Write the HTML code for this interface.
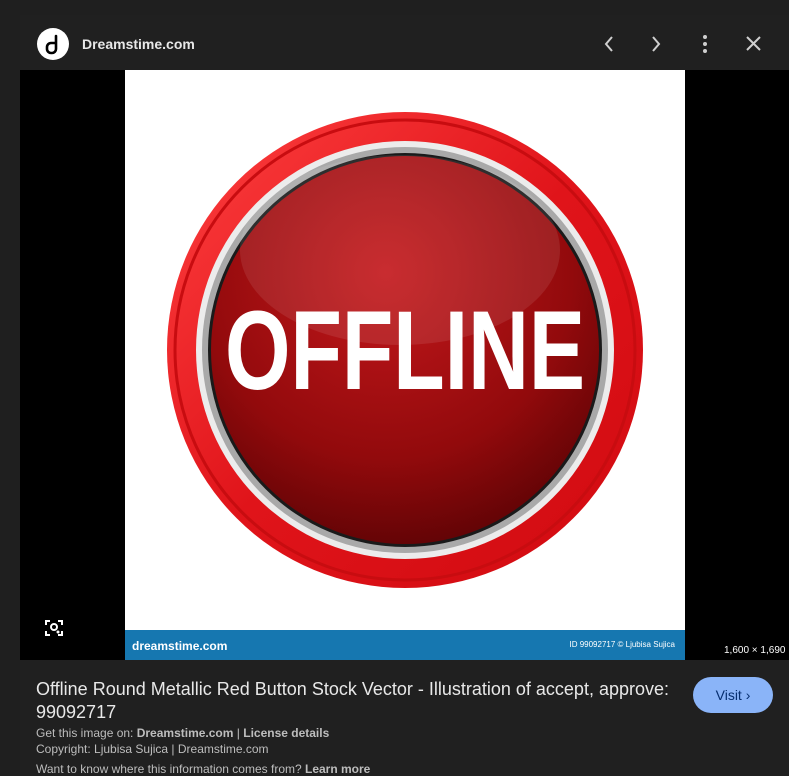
<!DOCTYPE html>
<html><head><meta charset="utf-8"><style>
*{margin:0;padding:0;box-sizing:border-box}
body{width:789px;height:776px;background:#1f1f1f;font-family:"Liberation Sans",sans-serif;overflow:hidden;position:relative;color:#e3e3e3}
.panel{position:absolute;left:20px;top:15px;width:769px;height:761px;background:#202020}
.logo{position:absolute;left:37px;top:28px;width:32px;height:32px;border-radius:50%;background:#fff}
.site{position:absolute;left:82px;top:36px;font-size:14px;font-weight:bold;color:#e8e8e8}
.img{position:absolute;left:20px;top:70px;width:769px;height:590px;background:#000}
.white{position:absolute;left:125px;top:70px;width:560px;height:590px;background:#fff;overflow:hidden}
.bar{position:absolute;left:0;top:560px;width:560px;height:30px;background:#1677b0}
.t{position:absolute;font-size:12px;color:#bdbdbd}
</style></head><body>
<div class="panel"></div>
<div class="logo"><svg width="32" height="32" viewBox="0 0 32 32"><path d="M19 8v13a4 4 0 0 1-4 4h-1a4 4 0 0 1-4-4v-2a4 4 0 0 1 4-4h5" fill="none" stroke="#000" stroke-width="2.6" stroke-linecap="round"/></svg></div>
<div class="site">Dreamstime.com</div>
<svg style="position:absolute;left:598px;top:33px" width="175" height="22" viewBox="0 0 175 22">
<path d="M14 4l-6 7 6 7" fill="none" stroke="#cfcfcf" stroke-width="2"/>
<path d="M55 4l6 7-6 7" fill="none" stroke="#cfcfcf" stroke-width="2"/>
<circle cx="107" cy="4" r="2" fill="#cfcfcf"/><circle cx="107" cy="11" r="2" fill="#cfcfcf"/><circle cx="107" cy="18" r="2" fill="#cfcfcf"/>
<path d="M149 4l13 13M162 4l-13 13" stroke="#cfcfcf" stroke-width="2"/>
</svg>
<div class="img"></div>
<div class="white">
<svg width="560" height="560" style="position:absolute;left:0;top:0">
<defs>
<radialGradient id="g1" cx="0.45" cy="0.3" r="0.8"><stop offset="0" stop-color="#c4181c"/><stop offset="0.6" stop-color="#920a0c"/><stop offset="1" stop-color="#500103"/></radialGradient>
<linearGradient id="g2" x1="0" y1="0" x2="1" y2="1"><stop offset="0" stop-color="#ff4040"/><stop offset="0.5" stop-color="#e0141a"/><stop offset="1" stop-color="#d00a10"/></linearGradient>
</defs>
<circle cx="280" cy="280" r="238" fill="url(#g2)"/>
<circle cx="280" cy="280" r="230" fill="none" stroke="#c80c10" stroke-width="3"/>
<circle cx="280" cy="280" r="209" fill="#ececec"/>
<circle cx="280" cy="280" r="203" fill="#a9a9a9"/>
<circle cx="280" cy="280" r="197" fill="#1a1a1a"/>
<circle cx="280" cy="280" r="194" fill="url(#g1)"/>
<ellipse cx="275" cy="180" rx="160" ry="95" fill="#fff" opacity="0.09"/>
<text x="100" y="319" font-family="'Liberation Sans Narrow','Liberation Sans',sans-serif" font-weight="bold" font-size="112" fill="#fff" textLength="360" lengthAdjust="spacingAndGlyphs">OFFLINE</text>
</svg>
<div class="bar"><span style="position:absolute;left:7px;top:9px;font-size:12px;font-weight:bold;color:#fff">dreamstime.com</span><span style="position:absolute;right:10px;top:10px;font-size:8px;color:#fff">ID 99092717 © Ljubisa Sujica</span></div>
</div>
<svg style="position:absolute;left:44px;top:618px" width="20" height="20" viewBox="0 0 20 20"><path d="M2 7V3h4M14 3h4v4M18 13v4h-4M6 17H2v-4" fill="none" stroke="#fff" stroke-width="2"/><circle cx="10" cy="9" r="3" fill="none" stroke="#fff" stroke-width="2"/><circle cx="14" cy="14" r="1.5" fill="#fff"/></svg>
<div style="position:absolute;left:724px;top:645px;font-size:10px;color:#fff">1,600 × 1,690</div>
<div style="position:absolute;left:36px;top:678px;width:660px;font-size:18px;line-height:23px;color:#e8e8e8">Offline Round Metallic Red Button Stock Vector - Illustration of accept, approve: 99092717</div>
<div style="position:absolute;left:693px;top:677px;width:80px;height:36px;border-radius:18px;background:#8ab4f8;color:#062e6f;font-size:14px;line-height:36px;text-align:center">Visit ›</div>
<div class="t" style="left:36px;top:726px">Get this image on: <b>Dreamstime.com</b> | <b>License details</b></div>
<div class="t" style="left:36px;top:742px">Copyright: Ljubisa Sujica | Dreamstime.com</div>
<div class="t" style="left:36px;top:762px">Want to know where this information comes from? <b>Learn more</b></div>
</body></html>
